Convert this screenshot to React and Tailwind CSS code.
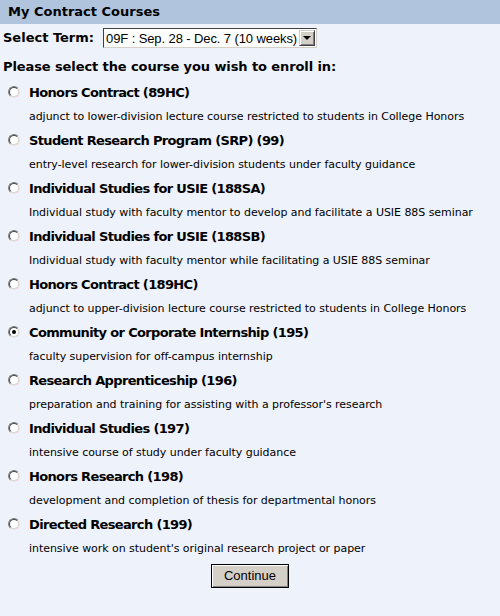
import React, { useState } from "react";

const courses = [
  { id: "89HC", title: "Honors Contract (89HC)", desc: "adjunct to lower-division lecture course restricted to students in College Honors" },
  { id: "99", title: "Student Research Program (SRP) (99)", desc: "entry-level research for lower-division students under faculty guidance" },
  { id: "188SA", title: "Individual Studies for USIE (188SA)", desc: "Individual study with faculty mentor to develop and facilitate a USIE 88S seminar" },
  { id: "188SB", title: "Individual Studies for USIE (188SB)", desc: "Individual study with faculty mentor while facilitating a USIE 88S seminar" },
  { id: "189HC", title: "Honors Contract (189HC)", desc: "adjunct to upper-division lecture course restricted to students in College Honors" },
  { id: "195", title: "Community or Corporate Internship (195)", desc: "faculty supervision for off-campus internship" },
  { id: "196", title: "Research Apprenticeship (196)", desc: "preparation and training for assisting with a professor's research" },
  { id: "197", title: "Individual Studies (197)", desc: "intensive course of study under faculty guidance" },
  { id: "198", title: "Honors Research (198)", desc: "development and completion of thesis for departmental honors" },
  { id: "199", title: "Directed Research (199)", desc: "intensive work on student's original research project or paper" },
];

function Radio({ checked }) {
  return (
    <span className="relative inline-block h-[12px] w-[12px] shrink-0 rounded-full border border-t-[#808080] border-l-[#808080] border-r-[#e0e0e0] border-b-[#e0e0e0] bg-white">
      <span className="absolute inset-0 rounded-full border border-t-[#404040] border-l-[#404040] border-r-[#d4d0c8] border-b-[#d4d0c8]" />
      {checked && <span className="absolute left-[3px] top-[3px] h-[4px] w-[4px] rounded-full bg-black" />}
    </span>
  );
}

export default function App() {
  const [selected, setSelected] = useState("195");

  return (
    <div className="min-h-[616px] w-[500px] bg-[#eef2fb] font-['DejaVu_Sans',sans-serif] text-black">
      <div className="h-[24px] bg-[#b0c4de] pl-[8px] text-[13px] font-bold leading-[24px]">My Contract Courses</div>

      <div className="flex items-center pl-[3px] pt-[4px]">
        <span className="text-[13px] font-bold">Select Term:</span>
        <div className="ml-[9px] flex h-[20px] w-[214px] items-center border border-t-[#404040] border-l-[#404040] border-r-[#d4d0c8] border-b-[#d4d0c8] bg-white">
          <span className="flex-1 whitespace-nowrap pl-[2px] font-['Liberation_Sans',sans-serif] text-[13px] leading-none tracking-[-0.1px]">09F : Sep. 28 - Dec. 7 (10 weeks)</span>
          <span className="mr-[1px] flex h-[16px] w-[16px] items-center justify-center border border-t-[#d4d0c8] border-l-[#d4d0c8] border-r-[#404040] border-b-[#404040] bg-[#d4d0c8] shadow-[inset_1px_1px_0_#fff,inset_-1px_-1px_0_#808080]">
            <span className="h-0 w-0 border-x-[4px] border-t-[4px] border-x-transparent border-t-black" />
          </span>
        </div>
      </div>

      <div className="pl-[3px] pt-[9px] text-[13px] font-bold tracking-[-0.1px]">Please select the course you wish to enroll in:</div>

      <div className="mt-[4px] flex flex-col">
        {courses.map((c) => (
          <div key={c.id} className="h-[48px] cursor-pointer" onClick={() => setSelected(c.id)}>
            <div className="flex h-[24px] items-center">
              <span className="ml-[8px] mr-[9px]">
                <Radio checked={selected === c.id} />
              </span>
              <span className="text-[13px] font-bold tracking-[-0.65px]">{c.title}</span>
            </div>
            <div className="h-[24px] pl-[29px] text-[11px] leading-[24px] tracking-[-0.05px]">{c.desc}</div>
          </div>
        ))}
      </div>

      <div className="flex justify-center pt-[3px]">
        <button className="h-[24px] w-[78px] border border-black bg-[#d4d0c8] font-['Liberation_Sans',sans-serif] text-[13px] shadow-[inset_1px_1px_0_#fff,inset_-1px_-1px_0_#808080]">
          Continue
        </button>
      </div>
    </div>
  );
}
